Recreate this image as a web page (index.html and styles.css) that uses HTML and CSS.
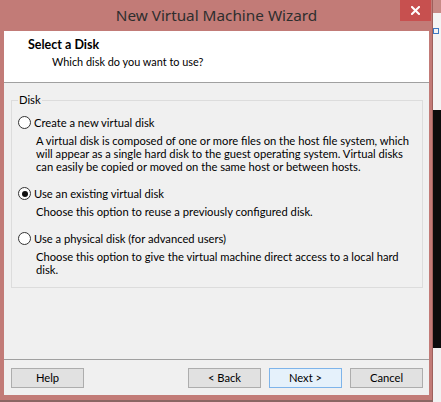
FILE: index.html
```html
<!DOCTYPE html>
<html>
<head>
<meta charset="utf-8">
<title>New Virtual Machine Wizard</title>
<link rel="stylesheet" href="styles.css">
</head>
<body>
<div class="screen">
  <div class="window">
    <div class="titlebar">
      <span class="title">New Virtual Machine Wizard</span>
      <button class="close" aria-label="Close"><svg width="9" height="9" viewBox="0 0 9 9"><path d="M1 1 L8 8 M8 1 L1 8" stroke="#fff" stroke-width="2" stroke-linecap="square"/></svg></button>
    </div>
    <div class="client">
      <div class="header">
        <div class="h-title">Select a Disk</div>
        <div class="h-sub">Which disk do you want to use?</div>
      </div>
      <div class="content">
        <fieldset class="group">
          <legend>Disk</legend>
          <div class="option">
            <div class="radio-row"><span class="radio"></span><span>Create a new virtual disk</span></div>
            <p class="desc">A virtual disk is composed of one or more files on the host file system, which<br>will appear as a single hard disk to the guest operating system. Virtual disks<br>can easily be copied or moved on the same host or between hosts.</p>
          </div>
          <div class="option">
            <div class="radio-row"><span class="radio checked"></span><span>Use an existing virtual disk</span></div>
            <p class="desc">Choose this option to reuse a previously configured disk.</p>
          </div>
          <div class="option">
            <div class="radio-row"><span class="radio"></span><span>Use a physical disk (for advanced users)</span></div>
            <p class="desc">Choose this option to give the virtual machine direct access to a local hard<br>disk.</p>
          </div>
        </fieldset>
      </div>
      <div class="footer">
        <button class="btn">Help</button>
        <span class="spacer"></span>
        <button class="btn">&lt; Back</button>
        <button class="btn default">Next &gt;</button>
        <button class="btn">Cancel</button>
      </div>
    </div>
  </div>
  <div class="backdrop">
    <div class="bd-top"></div>
    <div class="bd-light"><span class="bd-icon"></span></div>
    <div class="bd-dark"></div>
    <div class="bd-rest"></div>
  </div>
</div>
</body>
</html>
```
FILE: styles.css
```css
* { box-sizing: border-box; }
html, body { margin: 0; padding: 0; }
body {
  width: 441px;
  height: 402px;
  overflow: hidden;
  background: #8a6663;
  font-family: Lato, "Noto Sans", sans-serif;
  font-size: 11.2px;
  color: #000;
}
.screen { display: flex; width: 441px; height: 402px; }
.window {
  position: relative;
  width: 433px;
  height: 400px;
  background: #c27b77;
  border-right: 1px solid #9e605c;
  display: flex;
  flex-direction: column;
  padding: 0 3px 5px 4px;
}
.titlebar {
  height: 31px;
  display: flex;
  align-items: center;
  justify-content: center;
  padding-bottom: 1px;
}
.title { font-family: "Noto Sans", sans-serif; font-size: 15.3px; color: #2e2e2e; }
.close {
  position: absolute;
  top: 0;
  right: 1px;
  width: 31px;
  height: 21px;
  background: #c7504f;
  border: none;
  padding: 0;
  display: flex;
  align-items: center;
  justify-content: center;
}
.client {
  flex: 1;
  background: #f0f0f0;
  display: flex;
  flex-direction: column;
}
.header {
  height: 52px;
  background: #fff;
  border-bottom: 1px solid #a0a0a0;
  padding: 6px 0 0 24px;
}
.h-title { font-weight: bold; font-size: 12.5px; line-height: 15px; }
.h-sub { padding-left: 24px; font-size: 10.9px; line-height: 15px; margin-top: 2px; }
.content { flex: 1; }
.group {
  margin: 9px 6px 0 7px;
  border: 1px solid #dcdcdc;
  padding: 7px 0 11px 6px;
  min-width: 0;
}
.group legend {
  margin-left: 0;
  padding: 0 1px;
  line-height: 16px;
}
.option + .option { margin-top: 13px; }
.radio-row {
  display: flex;
  align-items: center;
  gap: 3px;
  height: 15px;
  white-space: nowrap;
}
.radio {
  width: 13px;
  height: 13px;
  border: 1px solid #333;
  border-radius: 50%;
  background: #fff;
  display: flex;
  align-items: center;
  justify-content: center;
  flex: none;
}
.radio.checked::after {
  content: "";
  width: 6px;
  height: 6px;
  border-radius: 50%;
  background: #111;
}
.desc {
  margin: 4px 0 0 18px;
  line-height: 13px;
  white-space: nowrap;
}
.footer {
  height: 36px;
  border-top: 1px solid #a0a0a0;
  display: flex;
  align-items: flex-start;
  gap: 8px;
  padding: 8px 6px 0 7px;
}
.spacer { flex: 1; }
.btn {
  width: 73px;
  height: 20px;
  border: 1px solid #adadad;
  background: #e1e1e1;
  font-family: inherit;
  font-size: 11.2px;
  color: #000;
  padding: 0;
  line-height: 16px;
}
.btn.default { border-color: #7eb4ea; background: #e5f1fb; }
.backdrop {
  width: 8px;
  height: 402px;
  display: flex;
  flex-direction: column;
}
.bd-top { height: 13px; background: #c88a86; }
.bd-light { height: 97px; background: #f4f4f4; padding-top: 15px; }
.bd-icon { display: block; width: 6px; height: 6px; border: 1px solid #3b79c4; }
.bd-dark { height: 238px; background: #0c0c0c; }
.bd-rest { flex: 1; background: #f2f2f2; }
```
